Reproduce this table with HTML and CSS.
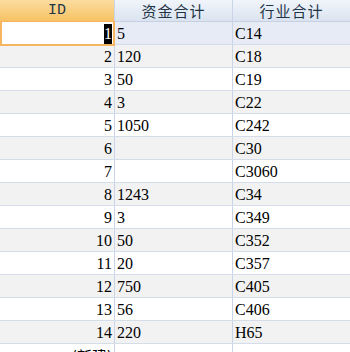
FILE: index.html
```html
<!DOCTYPE html>
<html>
<head>
<meta charset="utf-8">
<link rel="stylesheet" href="styles.css">
</head>
<body>
<div class="sheet">
  <div class="row head">
    <div class="cell h sel">ID</div>
    <div class="cell h">资金合计</div>
    <div class="cell h">行业合计</div>
  </div>
  <div class="row cur">
    <div class="cell id active"><span class="hl">1</span></div>
    <div class="cell">5</div>
    <div class="cell">C14</div>
  </div>
  <div class="row alt"><div class="cell id">2</div><div class="cell">120</div><div class="cell">C18</div></div>
  <div class="row"><div class="cell id">3</div><div class="cell">50</div><div class="cell">C19</div></div>
  <div class="row alt"><div class="cell id">4</div><div class="cell">3</div><div class="cell">C22</div></div>
  <div class="row"><div class="cell id">5</div><div class="cell">1050</div><div class="cell">C242</div></div>
  <div class="row alt"><div class="cell id">6</div><div class="cell"></div><div class="cell">C30</div></div>
  <div class="row"><div class="cell id">7</div><div class="cell"></div><div class="cell">C3060</div></div>
  <div class="row alt"><div class="cell id">8</div><div class="cell">1243</div><div class="cell">C34</div></div>
  <div class="row"><div class="cell id">9</div><div class="cell">3</div><div class="cell">C349</div></div>
  <div class="row alt"><div class="cell id">10</div><div class="cell">50</div><div class="cell">C352</div></div>
  <div class="row"><div class="cell id">11</div><div class="cell">20</div><div class="cell">C357</div></div>
  <div class="row alt"><div class="cell id">12</div><div class="cell">750</div><div class="cell">C405</div></div>
  <div class="row"><div class="cell id">13</div><div class="cell">56</div><div class="cell">C406</div></div>
  <div class="row alt"><div class="cell id">14</div><div class="cell">220</div><div class="cell">H65</div></div>
  <div class="row new"><div class="cell id cjk">(新建)</div><div class="cell"></div><div class="cell"></div></div>
</div>
</body>
</html>
```
FILE: styles.css
```css
html, body {
  margin: 0;
  padding: 0;
  background: #ffffff;
}
.sheet {
  width: 350px;
  height: 352px;
  overflow: hidden;
  font-family: "Liberation Serif", "Noto Sans CJK SC", serif;
  font-size: 16px;
  color: #000;
}
.row {
  display: grid;
  grid-template-columns: 114px 117px 117px;
  column-gap: 1px;
  background-color: #d5dcea;
  height: 23px;
}
.row > .cell {
  height: 22px;
  line-height: 23px;
  margin-bottom: 1px;
  background: #ffffff;
  padding: 0 2px;
  white-space: nowrap;
  box-sizing: border-box;
  box-shadow: 1px 0 0 #c9d4e6;
}
.row.alt > .cell { background: #f2f2f2; }
.row.cur > .cell { background: #e7ebf5; }
.row.head {
  height: 22px;
}
.cell.h {
  height: 22px;
  margin-bottom: 0;
  text-align: center;
  font-family: "Noto Sans CJK SC", sans-serif;
  font-size: 15px;
  line-height: 21px;
  color: #1f3547;
  background: linear-gradient(#f1f5fb, #dae3ef);
  border-bottom: 1px solid #c5d1e2;
  letter-spacing: 1px;
}
.cell.h.sel {
  font-family: "Liberation Mono", monospace;
  font-size: 15px;
  letter-spacing: 0;
  background: linear-gradient(#fbdc9f, #f6c264);
  border-bottom: 1px solid #f2b24f;
}
.cell.id { text-align: right; }
.cell.active {
  position: relative;
  background: #ffffff !important;
}
.cell.active::after {
  content: "";
  position: absolute;
  left: 0;
  right: -1px;
  top: -1px;
  bottom: -2px;
  border: 2px solid #f6b55e;
  border-top-width: 1px;
}
.hl {
  background: #000;
  color: #fff;
  display: inline-block;
  line-height: 20px;
  position: relative;
  z-index: 1;
}
.cjk {
  font-family: "Noto Sans CJK SC", sans-serif;
  font-size: 15px;
  line-height: 30px;
  padding-right: 4px;
}
```
